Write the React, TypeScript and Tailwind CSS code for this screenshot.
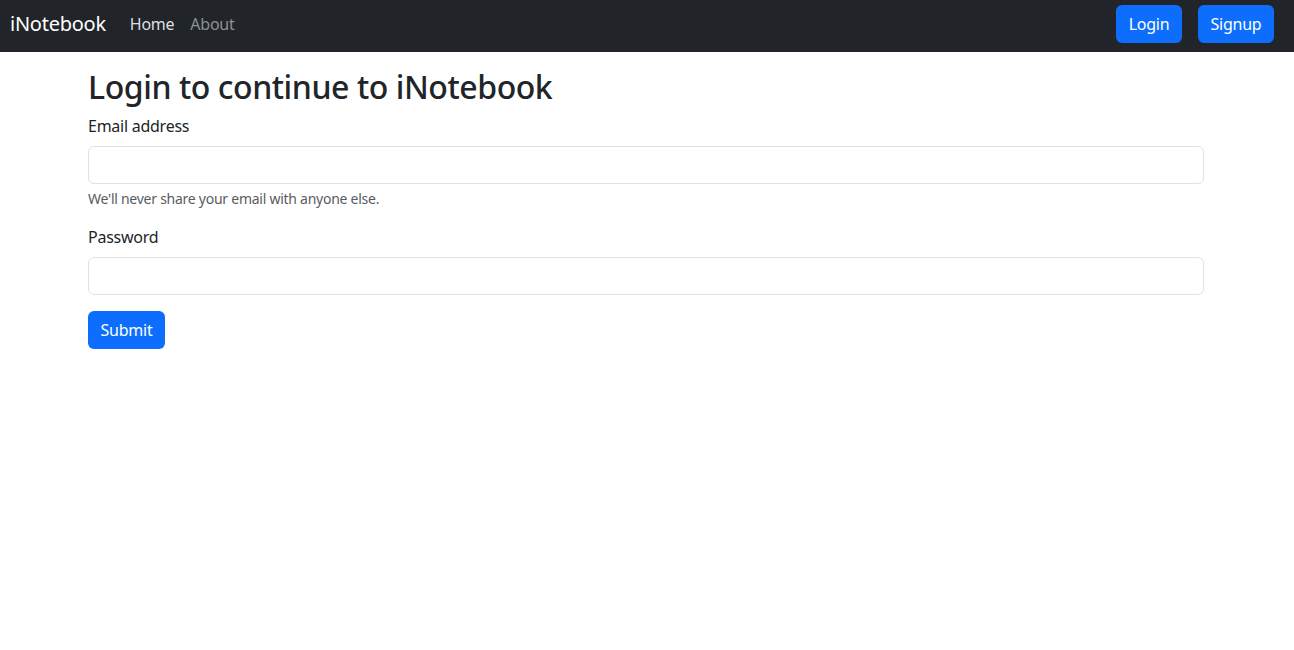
export default function App() {
  const font = { fontFamily: '"Noto Sans", "Open Sans", sans-serif' };
  return (
    <div className="min-h-[650px] bg-white text-[#212529] tracking-[-0.016em]" style={font}>
      <nav className="h-[52px] bg-[#212529] flex items-center pl-[10px] pr-[20px] pb-[4px]">
        <span className="text-[20px] text-white leading-none">iNotebook</span>
        <div className="flex items-center ml-[24px] gap-[16px] text-[16px]">
          <span className="text-[#dedfe0]">Home</span>
          <span className="text-[#8f9193]">About</span>
        </div>
        <div className="ml-auto flex gap-[16px]">
          <button className="h-[38px] w-[66px] rounded-[6px] bg-[#0d6efd] text-white text-[16px]">Login</button>
          <button className="h-[38px] w-[76px] rounded-[6px] bg-[#0d6efd] text-white text-[16px]">Signup</button>
        </div>
      </nav>
      <div className="ml-[88px] w-[1116px] pt-[16px]">
        <h2 className="text-[32px] font-medium leading-[38px] mb-[8px] tracking-[-0.0135em]">Login to continue to iNotebook</h2>
        <label className="block text-[16px] leading-[24px] mb-[8px]">Email address</label>
        <input className="block w-full h-[38px] border border-[#dee2e6] rounded-[6px] px-3" />
        <div className="mt-[4px] text-[14px] leading-[21px] text-[#595c5f] mb-[16px]">We'll never share your email with anyone else.</div>
        <label className="block text-[16px] leading-[24px] mb-[8px]">Password</label>
        <input type="password" className="block w-full h-[38px] border border-[#dee2e6] rounded-[6px] px-3 mb-[16px]" />
        <button className="h-[38px] w-[77px] rounded-[6px] bg-[#0d6efd] text-white text-[16px]">Submit</button>
      </div>
    </div>
  );
}
